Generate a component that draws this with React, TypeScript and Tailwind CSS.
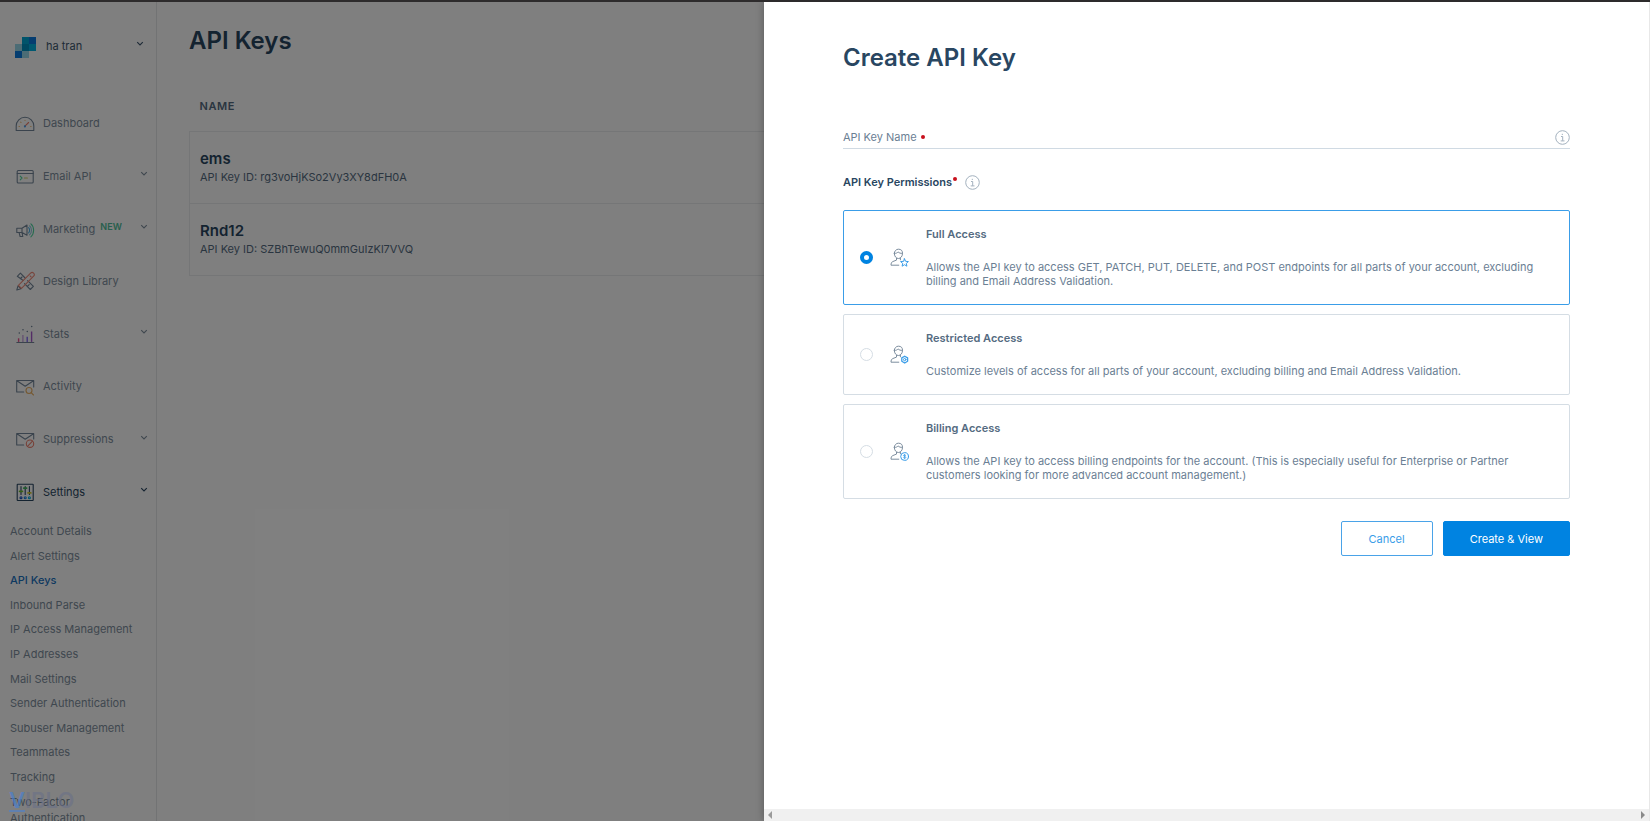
import { useState } from "react";
import type { ReactNode } from "react";

const Chevron = () => (
  <svg className="h-[6px] w-2 shrink-0" viewBox="0 0 8 6" fill="none" stroke="currentColor" strokeWidth="1.1">
    <path d="M1.2 1.2 4 4l2.800-2.800" />
  </svg>
);

const NavIcon = ({ children }: { children: ReactNode }) => (
  <svg
    className="h-5 w-5 shrink-0"
    viewBox="0 0 20 20"
    fill="none"
    stroke="#74879a"
    strokeWidth="1.1"
    strokeLinecap="round"
    strokeLinejoin="round"
  >
    {children}
  </svg>
);

const DashboardIcon = () => (
  <NavIcon>
    <path d="M1.200 17.500v-4.500a8.800 8.800 0 0 1 17.600 0v4.500z" />
    <path d="M9.700 13.400 13.600 9.500" stroke="#f2806c" />
    <circle cx="9.900" cy="13.400" r=".5" fill="#4aa0f0" stroke="#4aa0f0" />
    <path d="M4 13.500h.5M15.600 13.500h.5M5.700 9.200l.3.3M10 7.200v.3" stroke="#f2c07a" />
  </NavIcon>
);

const EmailApiIcon = () => (
  <NavIcon>
    <rect x="2.200" y="4.500" width="16" height="12.500" rx="1" />
    <path d="M2.200 7.500h16" />
    <path d="m5.200 10.200 1.800 1.800-1.800 1.800" stroke="#4fd7a0" />
    <path d="M9.400 12h3" stroke="#d0d26a" />
  </NavIcon>
);

const MarketingIcon = () => (
  <NavIcon>
    <path d="M1.800 9.300h5.200l5-3.300v10.300l-5-2.800H1.800zM4.100 13.700l1 3.800h2.700l-.8-3.800M7 9.300v4.300" />
    <path d="M13.600 8.700c1.300 1.300 1.300 4 0 5.200" stroke="#4ab4ea" />
    <path d="M14.600 6.800c2.500 2 2.500 7 0 9" stroke="#8cc7e0" />
    <path d="M15.900 4.800c3.600 3 3.600 10 0 13" stroke="#4fd7a0" />
  </NavIcon>
);

const DesignIcon = () => (
  <NavIcon>
    <path d="M8.200 9.500 2.300 5.300 5.400 2.200l4.700 4.800M12.600 9.600l5.800 5.800-3.100 3.100-5.800-5.800M5.400 7.600l1.600-1.600M12.600 15.200l1.600-1.600" />
    <path d="M1.800 19 3 14.800l3 3z" />
    <path d="M3.400 14.300 15.600 2.200a1.900 1.900 0 0 1 3 3L6.500 17.400z" stroke="#f28a78" />
    <path d="m15.200 5 .9.900" stroke="#f28a78" />
  </NavIcon>
);

const StatsIcon = () => (
  <NavIcon>
    <path d="M1.800 18.500h17" />
    <g strokeWidth="1.400" strokeLinecap="butt">
      <path d="M3.600 17.900v-3.600" stroke="#e8508e" />
      <path d="M7.900 17.900v-7" stroke="#cda8e4" />
      <path d="M12.200 17.900v-5.200" stroke="#836af4" />
      <path d="M16.600 17.900V7.500" stroke="#a85acc" />
    </g>
    <path d="M4.200 9h.2M7.900 5.700h.2M12.200 7.500h.2M16.600 2.500h.2" strokeWidth="1.400" />
  </NavIcon>
);

const ActivityIcon = () => (
  <NavIcon>
    <path d="M8.700 16H1.700V4.500h17v6.500M1.900 4.700 10.200 10.300l8.300-5.600" />
    <circle cx="14" cy="14.500" r="3" stroke="#ecb264" />
    <path d="m16.200 16.700 2.300 2.300" stroke="#ecb264" />
  </NavIcon>
);

const SuppressionsIcon = () => (
  <NavIcon>
    <path d="M8.700 16H1.700V4.500h17v5.500M1.900 4.700 10.200 10.300l8.300-5.600" />
    <circle cx="15" cy="14.700" r="3.700" stroke="#f08270" />
    <path d="m12.500 17.300 5-5.200" stroke="#f08270" />
  </NavIcon>
);

const SettingsIcon = () => (
  <NavIcon>
    <rect x="2.200" y="2.300" width="16" height="16.200" rx=".5" stroke="#294661" />
    <path d="M6 4.500v8M10.200 4.500v8M14.400 4.500v8" stroke="#294661" />
    <path d="M4.600 9.300h2.800" stroke="#6fc331" strokeWidth="1.800" />
    <path d="M8.800 6.100h2.800" stroke="#3eb85a" strokeWidth="1.800" />
    <path d="M13 10.900h2.800" stroke="#d4cd31" strokeWidth="1.800" />
    <circle cx="6" cy="15.700" r="1" stroke="#1a50c2" />
    <circle cx="10.200" cy="15.700" r="1" stroke="#1a82e2" />
    <circle cx="14.400" cy="15.700" r="1" stroke="#00b2e3" />
  </NavIcon>
);

const navItems = [
  { label: "Dashboard", icon: <DashboardIcon /> },
  { label: "Email API", icon: <EmailApiIcon />, expandable: true },
  { label: "Marketing", icon: <MarketingIcon />, expandable: true, isNew: true },
  { label: "Design Library", icon: <DesignIcon /> },
  { label: "Stats", icon: <StatsIcon />, expandable: true },
  { label: "Activity", icon: <ActivityIcon /> },
  { label: "Suppressions", icon: <SuppressionsIcon />, expandable: true },
  { label: "Settings", icon: <SettingsIcon />, expandable: true, active: true },
];

const settingsItems = [
  "Account Details",
  "Alert Settings",
  "API Keys",
  "Inbound Parse",
  "IP Access Management",
  "IP Addresses",
  "Mail Settings",
  "Sender Authentication",
  "Subuser Management",
  "Teammates",
  "Tracking",
];

const apiKeys = [
  { name: "ems", id: "rg3voHjKSo2Vy3XY8dFH0A" },
  { name: "Rnd12", id: "SZBhTewuQ0mmGuIzKl7VVQ" },
];

const Logo = () => (
  <svg className="h-[21px] w-[21px]" viewBox="0 0 21 21" shapeRendering="crispEdges">
    <path d="M7 0h7v7H7z" fill="#00a9d6" />
    <path d="M14 0h7v7h-7z" fill="#0a7be0" />
    <path d="M0 7h7v7H0z" fill="#99d9ea" />
    <path d="M7 7h7v7H7z" fill="#0092c2" />
    <path d="M14 7h7v7h-7z" fill="#00b2e3" />
    <path d="M0 14h7v7H0z" fill="#0a7be0" />
    <path d="M7 14h7v7H7z" fill="#99d9ea" />
  </svg>
);

const Sidebar = () => (
  <aside className="flex w-[157px] shrink-0 flex-col border-r border-[#e4e6e8] text-[11px] leading-4 text-[#7f8f9e]">
    <button className="mt-[35px] flex h-[21px] items-center pl-[15px] pr-3 text-[#3d566e]">
      <Logo />
      <span className="ml-[10px] flex-1 pb-1 text-left">ha tran</span>
      <span className="pb-2">
        <Chevron />
      </span>
    </button>

    <nav className="mt-[39px] flex flex-col">
      <div className="flex h-[421px] flex-col">
        {navItems.map((item) => (
          <a
            key={item.label}
            href="#"
            className={`flex flex-1 items-center pl-[15px] pr-2 ${item.active ? "text-[#294661]" : ""}`}
          >
            {item.icon}
            <span className="ml-2">{item.label}</span>
            {item.isNew && (
              <span className="ml-[5px] pb-1 text-[9px] leading-3 font-semibold tracking-wide text-[#4fc09a]">NEW</span>
            )}
            {item.expandable && (
              <span className="ml-auto pb-[3px]">
                <Chevron />
              </span>
            )}
          </a>
        ))}
      </div>

      <div className="mt-px flex h-[270px] flex-col">
        {settingsItems.map((label) => (
          <a
            key={label}
            href="#"
            className={`flex flex-1 items-center pl-[10px] ${label === "API Keys" ? "font-medium text-[#1a72c2]" : ""}`}
          >
            {label}
          </a>
        ))}
      </div>
      <a href="#" className="mt-[5px] pr-6 pl-[10px]">
        Two-Factor Authentication
      </a>
    </nav>
  </aside>
);

const KeysPage = () => (
  <main className="min-w-0 flex-1 px-8 pt-[23px]">
    <h1 className="text-2xl leading-8 font-semibold text-[#294661]">API Keys</h1>
    <table className="mt-[39px] w-full border-collapse text-left">
      <thead>
        <tr>
          <th className="h-[35px] pl-[10px] align-top text-[11px] leading-5 font-semibold tracking-wider text-[#546b81]">
            NAME
          </th>
        </tr>
      </thead>
      <tbody>
        {apiKeys.map((key) => (
          <tr key={key.id} className="h-[72px] border border-[#ebedee]">
            <td className="pb-px pl-[10px] text-[#546b81]">
              <p className="text-[15px] leading-5 font-semibold text-[#294661]">{key.name}</p>
              <p className="text-[11px] leading-4">API Key ID: {key.id}</p>
            </td>
          </tr>
        ))}
      </tbody>
    </table>
  </main>
);

const InfoIcon = () => (
  <svg className="h-[15px] w-[15px]" viewBox="0 0 15 15" fill="none" stroke="#a3b1be">
    <circle cx="7.500" cy="7.500" r="6.800" />
    <path d="M6 6.500h1.700v4.300M5.700 10.900h3.800M7.300 3.800v1.200" />
  </svg>
);

const UserIcon = ({ children }: { children: ReactNode }) => (
  <svg
    className="h-5 w-[19px] shrink-0"
    viewBox="0 0 19 20"
    fill="none"
    stroke="#7c8d9e"
    strokeLinecap="round"
    strokeLinejoin="round"
  >
    <path d="M4.300 5.300a4.100 4.100 0 0 1 8.200 0c0 3-1.800 5.200-4.100 5.200S4.300 8.300 4.300 5.300z" />
    <path d="M4.500 5.400c1.400.1 2.600-.4 3.600-1.500 1 1.100 2.400 1.600 4.200 1.500" />
    <path d="M6.500 10.200v1.900l-4 1.600C1.500 14.200 1 15.400 1 17.200h7.800M10.400 10.200v1.600" />
    {children}
  </svg>
);

const permissions = [
  {
    value: "full",
    title: "Full Access",
    text: "Allows the API key to access GET, PATCH, PUT, DELETE, and POST endpoints for all parts of your account, excluding billing and Email Address Validation.",
    badge: (
      <path
        d="m14.500 10.800 1.100 2.500 2.800.3-2.100 1.800.6 2.800-2.400-1.500-2.400 1.500.6-2.800-2.100-1.800 2.800-.3z"
        stroke="#3a9de8"
      />
    ),
  },
  {
    value: "restricted",
    title: "Restricted Access",
    text: "Customize levels of access for all parts of your account, excluding billing and Email Address Validation.",
    badge: (
      <g stroke="#3a9de8">
        <path d="m14.700 11.200 2.900 1.700v3.400l-2.900 1.700-2.900-1.700v-3.400z" strokeWidth="1.300" />
        <circle cx="14.700" cy="14.600" r="1.200" />
      </g>
    ),
  },
  {
    value: "billing",
    title: "Billing Access",
    text: "Allows the API key to access billing endpoints for the account. (This is especially useful for Enterprise or Partner customers looking for more advanced account management.)",
    badge: (
      <g stroke="#3a9de8">
        <circle cx="14.600" cy="14.500" r="3.900" />
        <path d="M15.800 13.300c-.4-.5-2.400-.6-2.400.3 0 1 2.500.7 2.500 1.800 0 1-2.200.9-2.600.2M14.600 12.300v4.500" strokeWidth=".8" />
      </g>
    ),
  },
];

const CreateKeyDrawer = () => {
  const [selected, setSelected] = useState("full");

  return (
    <section
      role="dialog"
      aria-labelledby="drawer-title"
      className="absolute inset-y-0 right-0 flex w-[53.7%] flex-col border-r border-[#e8e8e8] bg-white text-[11px] leading-[14px] text-[#6b8094] shadow-[0_0_8px_rgba(0,0,0,0.3)]"
    >
      <form className="flex-1 px-[79px] pt-10" onSubmit={(e) => e.preventDefault()}>
        <h2 id="drawer-title" className="text-2xl leading-8 font-semibold text-[#294661]">
          Create API Key
        </h2>

        <div className="mt-14 flex h-[19px] items-start border-b border-[#d0dae3]">
          <label htmlFor="key-name" className="flex items-center gap-1">
            API Key Name
            <span className="h-1 w-1 rounded-full bg-[#c8101c]" />
          </label>
          <input id="key-name" type="text" className="h-4 min-w-0 flex-1 px-2 outline-none" />
          <button type="button" aria-label="About API key names">
            <InfoIcon />
          </button>
        </div>

        <fieldset className="mt-[25px]">
          <legend className="flex items-center font-semibold text-[#294661]">
            API Key Permissions
            <span className="mb-[6px] ml-px h-1 w-1 rounded-full bg-[#c8101c]" />
            <button type="button" aria-label="About permissions" className="ml-2 h-4">
              <InfoIcon />
            </button>
          </legend>

          <div className="mt-5 flex flex-col gap-[9px]">
            {permissions.map((p) => (
              <label
                key={p.value}
                className={`flex items-center gap-[17px] rounded-[2px] border p-4 ${
                  selected === p.value ? "border-[#3a9de8]" : "border-[#d5dde4]"
                }`}
              >
                <input
                  type="radio"
                  name="permission"
                  value={p.value}
                  checked={selected === p.value}
                  onChange={() => setSelected(p.value)}
                  className="h-[13px] w-[13px] shrink-0 appearance-none rounded-full border border-[#d5dde4] checked:border-4 checked:border-[#0083e1]"
                />
                <UserIcon>{p.badge}</UserIcon>
                <span className="flex flex-col gap-[19px]">
                  <span className="font-semibold text-[#546b81]">{p.title}</span>
                  <span>{p.text}</span>
                </span>
              </label>
            ))}
          </div>
        </fieldset>

        <div className="mt-[22px] flex justify-end gap-[10px]">
          <button type="button" className="h-[35px] rounded-[2px] border border-[#4aa3e8] px-[27px] text-[#3a9de8]">
            Cancel
          </button>
          <button type="submit" className="h-[35px] rounded-[2px] border border-[#0083e1] bg-[#0083e1] px-[26px] text-white">
            Create & View
          </button>
        </div>
      </form>

      <div className="flex h-3 items-center justify-between bg-[#f0f0f0] px-1">
        <svg className="h-2 w-1" viewBox="0 0 4 8" fill="#9a9a9a">
          <path d="M4 0v8L0 4z" />
        </svg>
        <svg className="h-2 w-1" viewBox="0 0 4 8" fill="#8a8a8a">
          <path d="M0 0v8l4-4z" />
        </svg>
      </div>
    </section>
  );
};

export default function App() {
  return (
    <div className="flex h-screen flex-col overflow-hidden bg-white font-[Inter,sans-serif]">
      <div className="h-[2px] shrink-0 bg-[#2d2b2c]" />
      <div className="relative flex min-h-0 flex-1 overflow-hidden">
        <Sidebar />
        <KeysPage />
        <div className="absolute inset-0 bg-black/50" />
        <div className="absolute bottom-[9px] left-[9px] flex text-[22px] leading-5 font-semibold text-[#6a7088]/60">
          <span className="border-b-2 border-[#4a80d0]/60 text-[#4a80d0]/70">V</span>
          <span>IBLO</span>
        </div>
        <CreateKeyDrawer />
      </div>
    </div>
  );
}
